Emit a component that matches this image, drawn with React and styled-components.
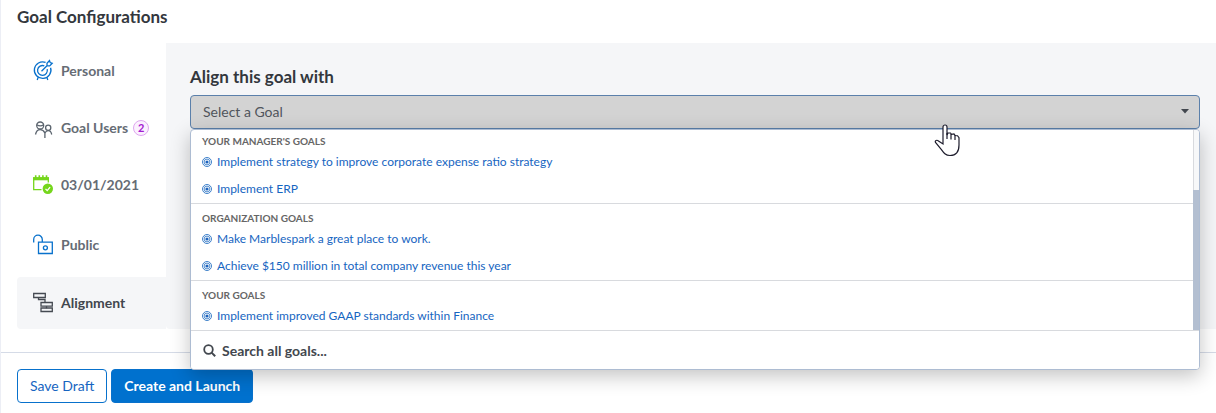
import React from "react";
import styled, { createGlobalStyle } from "styled-components";

const tabs = [
  { name: "Personal", icon: "target", color: "#0871cc" },
  { name: "Goal Users", icon: "users", color: "#5b646e", count: 2 },
  { name: "03/01/2021", icon: "calendar", color: "#75d61c" },
  { name: "Public", icon: "lock", color: "#0871cc", height: 63 },
  { name: "Alignment", icon: "tree", color: "#454a52", height: 52, active: true },
];

const groups = [
  {
    title: "YOUR MANAGER'S GOALS",
    goals: [
      "Implement strategy to improve corporate expense ratio strategy",
      "Implement ERP",
    ],
  },
  {
    title: "ORGANIZATION GOALS",
    goals: [
      "Make Marblespark a great place to work.",
      "Achieve $150 million in total company revenue this year",
    ],
  },
  {
    title: "YOUR GOALS",
    goals: ["Implement improved GAAP standards within Finance"],
  },
];

const drawings = {
  target: (
    <>
      <path d="M12.6 1.4A8.300 8.300 0 1 0 17.600 6.800" />
      <path d="M11.300 4.900a4.900 4.900 0 1 0 2.900 3.300" />
      <path d="M8.500 10.300l6-6M14 4.800V2.300L16.500-.4l.7 2 2 .7-2.500 2.600H14" />
      <path d="M5.200 16.300l-1 2.700M13.800 16.300l1 2.700" />
    </>
  ),
  users: (
    <>
      <circle cx="7.200" cy="7.500" r="3.500" />
      <path d="M3.800 6.800c2.400 1.500 4.600 1.500 6.800 0" />
      <path d="M2.500 16.500c.6-2.800 2.200-4.800 4.700-4.800 2.300 0 3.900 1.600 4.700 3.300V20" />
      <circle cx="15.200" cy="9.800" r="2.600" />
      <path d="M11.900 15c.8-1.500 1.900-2.300 3.300-2.300 1.900 0 3 1.300 3.500 3.800" />
    </>
  ),
  calendar: (
    <>
      <path d="M8.500 14.700H.7V3.500h14.600v4" />
      <path d="M0 3.700h16" strokeWidth="3.200" />
      <path d="M2.700.300v3M6.300.300v3M9.900.300v3M13.500.300v3" strokeWidth="1.600" />
      <circle cx="14.800" cy="13.800" r="5.200" fill="currentColor" stroke="none" />
      <path d="M12.500 13.900l1.700 1.700 2.900-3.400" stroke="#fff" />
    </>
  ),
  lock: (
    <>
      <path d="M.7 7.500V4.500a4.300 4.300 0 0 1 8.600 0V7" />
      <path d="M5.500 7.200h13.800v11.300H5.500z" />
      <circle cx="12.400" cy="12.800" r="2" />
    </>
  ),
  tree: (
    <>
      <path d="M.7 1.500h11.600v4H.7zM8 10.500h11.300v3.700H8zM8 16h11.300v3.500H8z" />
      <path d="M5.500 5.500v2h6.500v3M13.500 14.200v2" />
    </>
  ),
};

const Bullseye = () => (
  <svg width="10" height="10" viewBox="0 0 10 10" fill="none" stroke="#2872c4">
    <circle cx="5" cy="5" r="4.500" strokeWidth=".9" />
    <circle cx="5" cy="5" r="2.900" strokeWidth=".8" />
    <circle cx="5" cy="5" r="1.600" fill="#1b62bd" stroke="none" />
  </svg>
);

const App = () => {
  return (
    <>
      <GlobalStyle />
      <Page>
        <Title>Goal Configurations</Title>
        <Body>
          <Tabs>
            {tabs.map((tab) => (
              <Tab key={tab.name} $active={tab.active} $height={tab.height}>
                <TabIcon viewBox="0 0 20 20" $color={tab.color}>
                  {drawings[tab.icon]}
                </TabIcon>
                {tab.name}
                {tab.count && <Badge>{tab.count}</Badge>}
              </Tab>
            ))}
          </Tabs>
          <Panel>
            <Label htmlFor="goal">Align this goal with</Label>
            <Field>
              <Select id="goal" defaultValue="">
                <option value="">Select a Goal</option>
              </Select>
              <Caret viewBox="0 0 8 5">
                <path d="M0 0h8L4 4.500z" />
              </Caret>
              <Menu>
                <Scroller>
                  <Groups>
                    {groups.map((group) => (
                      <Group key={group.title}>
                        <GroupTitle>{group.title}</GroupTitle>
                        {group.goals.map((goal) => (
                          <Goal key={goal} href="#goal">
                            <Bullseye />
                            {goal}
                          </Goal>
                        ))}
                      </Group>
                    ))}
                  </Groups>
                  <Track>
                    <Thumb />
                  </Track>
                </Scroller>
                <Search type="button">
                  <svg width="13" height="13" viewBox="0 0 13 13" fill="none" stroke="currentColor">
                    <circle cx="5.500" cy="5.500" r="4.300" strokeWidth="1.800" />
                    <path d="M8.600 8.600l3.600 3.600" strokeWidth="2" />
                  </svg>
                  Search all goals...
                </Search>
              </Menu>
              <Pointer viewBox="0 0 26 33">
                <path d="M9 20V3a2 2 0 0 1 4 0v8l1-2h2.500l1 1.300 2.500-.3 1.200 1.500 2.300.200 1.500 2v7.300c0 7-3 10.500-9 10.500-4.500 0-6.500-3-9-6.500L1.500 18.500C.5 16.500 3 15.500 4.500 17z" />
                <path d="M13 9v6M17 10v5.500M21 11v5" />
              </Pointer>
            </Field>
          </Panel>
        </Body>
        <Footer>
          <Button type="button">Save Draft</Button>
          <Button type="button" $primary>
            Create and Launch
          </Button>
        </Footer>
      </Page>
    </>
  );
};

const GlobalStyle = createGlobalStyle`
  * {
    box-sizing: border-box;
  }
  body {
    margin: 0;
    background: #fff;
    color: #33373d;
    font-family: Lato, "Liberation Sans", sans-serif;
  }
  button, select {
    font-family: inherit;
  }
`;

const Page = styled.main`
  border-left: 1px solid #eceef5;
  min-height: 100vh;
`;

const Title = styled.h1`
  margin: 0;
  padding: 7px 16px 16px;
  font-size: 17px;
  line-height: 20px;
  font-weight: 700;
`;

const Body = styled.div`
  display: flex;
  padding-left: 16px;
`;

const Tabs = styled.nav`
  width: 149px;
  flex-shrink: 0;
  display: flex;
  flex-direction: column;
`;

const Tab = styled.button`
  display: flex;
  align-items: center;
  height: ${(props) => props.$height || 57}px;
  padding: 0 0 2px 16px;
  border: none;
  border-radius: 4px 0 0 4px;
  background: ${(props) => (props.$active ? "#f5f6f8" : "transparent")};
  color: ${(props) => (props.$active ? "#42474e" : "#666c75")};
  font-size: 14px;
  font-weight: 700;
`;

const TabIcon = styled.svg`
  width: 20px;
  height: 20px;
  margin-right: 8px;
  overflow: visible;
  fill: none;
  color: ${(props) => props.$color};
  stroke: currentColor;
  stroke-width: 1.3;
`;

const Badge = styled.span`
  width: 16px;
  height: 16px;
  margin-left: 5px;
  border: 1px solid #dfa6f0;
  border-radius: 50%;
  background: #fbf0fe;
  color: #a31bd0;
  font-size: 11px;
  line-height: 14px;
  text-align: center;
`;

const Panel = styled.section`
  flex: 1;
  padding: 24px 16px 0 24px;
  border-radius: 0 0 0 4px;
  background: #f5f6f8;
`;

const Label = styled.label`
  display: block;
  margin-bottom: 8px;
  font-size: 17px;
  line-height: 20px;
  font-weight: 700;
`;

const Field = styled.div`
  position: relative;
`;

const Select = styled.select`
  display: block;
  width: 100%;
  height: 34px;
  padding: 0 12px 2px;
  appearance: none;
  border: 1px solid #5b80ab;
  border-radius: 4px;
  background: #d3d3d3;
  color: #50555c;
  font-size: 14px;
`;

const Caret = styled.svg`
  position: absolute;
  top: 14px;
  right: 11px;
  width: 8px;
  height: 5px;
  fill: #42474e;
`;

const Menu = styled.div`
  position: absolute;
  top: 100%;
  left: 0;
  right: 0;
  border: 1px solid #adbcd2;
  border-radius: 4px;
  background: #fff;
  box-shadow: 0 6px 20px rgba(0, 0, 0, 0.24);
  overflow: hidden;
`;

const Scroller = styled.div`
  display: flex;
`;

const Groups = styled.div`
  flex: 1;
`;

const Group = styled.div`
  padding-top: 6px;
  border-bottom: 1px solid #d8dade;
  &:first-child {
    padding-top: 3px;
  }
`;

const GroupTitle = styled.h2`
  margin: 0;
  padding: 0 11px;
  color: #666;
  font-size: 10px;
  line-height: 16px;
  font-weight: 700;
`;

const Goal = styled.a`
  display: flex;
  align-items: center;
  gap: 5px;
  height: 27px;
  padding: 0 11px 2px;
  color: #1665c1;
  font-size: 12px;
  text-decoration: none;
`;

const Track = styled.div`
  display: flex;
  align-items: flex-end;
  width: 6px;
  border-left: 1px solid #d8dade;
  border-bottom: 1px solid #d8dade;
  background: #f7f8f9;
`;

const Thumb = styled.div`
  width: 6px;
  height: 70%;
  margin-left: -1px;
  flex-shrink: 0;
  background: #b3bfd1;
`;

const Search = styled.button`
  display: flex;
  align-items: center;
  gap: 6px;
  width: 100%;
  height: 38px;
  padding: 0 12px;
  border: none;
  background: #fff;
  color: #42474e;
  font-size: 14px;
  font-weight: 700;
`;

const Pointer = styled.svg`
  position: absolute;
  top: 29px;
  right: 240px;
  width: 26px;
  height: 33px;
  fill: #fff;
  stroke: #1d1c2c;
  stroke-width: 1.2;
  pointer-events: none;
`;

const Footer = styled.footer`
  display: flex;
  gap: 4px;
  margin-top: 23px;
  padding: 16px;
  border-top: 1px solid #d5dbe7;
`;

const Button = styled.button`
  height: 34px;
  padding: 0 12px 2px;
  border: 1px solid #0871cc;
  border-radius: 4px;
  background: ${(props) => (props.$primary ? "#0071ce" : "#fff")};
  color: ${(props) => (props.$primary ? "#fff" : "#1665c1")};
  font-size: 14px;
  font-weight: ${(props) => (props.$primary ? 700 : 400)};
`;

export default App;
